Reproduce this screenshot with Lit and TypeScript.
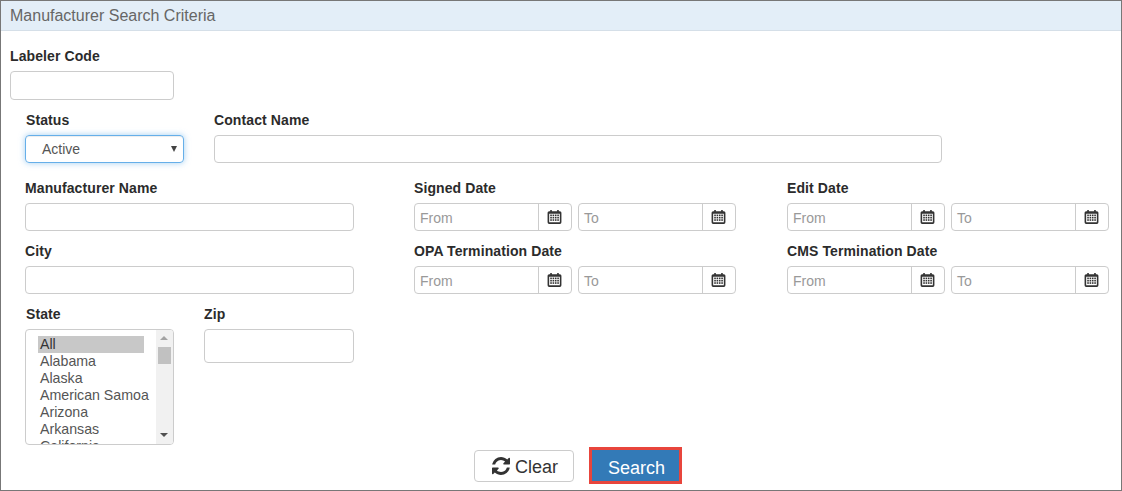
import { LitElement, html, css, svg } from "lit";
import { customElement } from "lit/decorators.js";

const cal = html`<svg class="cal" viewBox="0 0 14 15" width="15" height="16">
  <path fill="#333" fill-rule="evenodd" d="M2 2h1V1h1.5v1h5V1H11v1h1a1.5 1.5 0 0 1 1.5 1.5v9A1.5 1.5 0 0 1 12 14H2a1.5 1.5 0 0 1-1.5-1.5v-9A1.5 1.5 0 0 1 2 2zM2 4.5v8h10v-8z"/>
  ${[5.2, 7.4, 9.6].flatMap((y) => [3, 5.2, 7.4, 9.6].map((x) => svg`<rect x="${x}" y="${y}" width="1.5" height="1.5" fill="#333"/>`))}
</svg>`;

@customElement("date-range")
class DateRange extends LitElement {
  static styles = css`
    :host { display: grid; grid-template-columns: 158px 158px; column-gap: 6px; }
    .g { display: flex; height: 28px; box-sizing: border-box; border: 1px solid #ccc; border-radius: 4px; background: #fff; }
    .t { flex: 1; padding-left: 5px; font-size: 14px; line-height: 29px; color: #999; }
    .b { width: 33px; border-left: 1px solid #ccc; display: flex; align-items: center; justify-content: center; padding-right: 2px; box-sizing: border-box; }
    .cal { display: block; margin-top: -1px; }
  `;
  render() {
    return html`
      <div class="g"><div class="t">From</div><div class="b">${cal}</div></div>
      <div class="g"><div class="t">To</div><div class="b">${cal}</div></div>`;
  }
}

@customElement("app-root")
class AppRoot extends LitElement {
  static styles = css`
    :host { display: block; font-family: "Liberation Sans", Arial, sans-serif; color: #333; }
    .card { height: 491px; box-sizing: border-box; border: 1px solid #777; display: flex; flex-direction: column; }
    .head { height: 30px; box-sizing: border-box; border-bottom: 1px solid #d5dfe8; background: #e3eef8; padding-left: 9px; font-size: 16px; line-height: 29px; color: #666; }
    .body { flex: 1; padding-top: 17px; display: flex; flex-direction: column; }
    label { display: block; font-size: 14px; letter-spacing: 0.1px; font-weight: bold; line-height: 17px; color: #2b2b2b; height: 17px; margin-bottom: 6px; }
    .in { box-sizing: border-box; height: 28px; border: 1px solid #ccc; border-radius: 4px; background: #fff; }
    .r1 { padding-left: 9px; width: 164px; }
    .r1 .in { height: 29px; }
    .r2 { margin-top: 12px; padding-left: 24px; display: grid; grid-template-columns: 159px 728px; column-gap: 30px; }
    .r2 label { padding-left: 1px; }
    .r2 label.c { padding-left: 0; }
    .sel { box-sizing: border-box; height: 28px; border: 1px solid #66afe9; border-radius: 4px; box-shadow: 0 0 6px rgba(102,175,233,.6), inset 0 1px 1px rgba(0,0,0,.075); display: flex; align-items: center; padding-left: 16px; font-size: 14px; color: #555; position: relative; }
    .arr { position: absolute; right: 6px; top: 10px; width: 0; height: 0; border-left: 3px solid transparent; border-right: 3px solid transparent; border-top: 6px solid #444; }
    .r3 { margin-top: 17px; padding-left: 24px; display: grid; grid-template-columns: 329px 322px 322px; column-gap: 60px; row-gap: 12px; }
    .r3 > div:nth-child(3n) { margin-left: -9px; }
    .r5 { margin-top: 12px; padding-left: 24px; display: grid; grid-template-columns: 149px 150px; column-gap: 30px; align-items: start; }
    .r5 label { padding-left: 1px; }
    .r5 label.z { padding-left: 0; }
    .list { box-sizing: border-box; height: 116px; border: 1px solid #ccc; border-radius: 4px; overflow: hidden; display: flex; background: #fff; }
    .opts { flex: 1; padding: 6px 0 0 12px; font-size: 14.2px; line-height: 17px; color: #555; overflow: hidden; }
    .opt { padding-left: 2px; white-space: nowrap; }
    .opt.s { background: #c8c8c8; color: #333; width: 104px; }
    .sb { width: 17px; background: #f1f1f1; display: flex; flex-direction: column; align-items: center; position: relative; }
    .up, .dn { position: absolute; left: 4px; width: 0; height: 0; border-left: 4px solid transparent; border-right: 4px solid transparent; }
    .up { top: 6px; border-bottom: 4px solid #a3a3a3; }
    .dn { bottom: 7px; border-top: 4px solid #505050; }
    .th { position: absolute; left: 2px; top: 17px; width: 13px; height: 17px; background: #c1c1c1; }
    .zip { height: 34px; }
    .foot { position: absolute; left: 474px; top: 447px; display: flex; align-items: center; gap: 15px; }
    button { font-family: inherit; box-sizing: border-box; cursor: pointer; }
    .clear { width: 100px; height: 32px; border: 1px solid #ccc; border-radius: 4px; background: #fff; color: #333; font-size: 18px; display: flex; align-items: center; justify-content: center; gap: 5px; padding: 3px 0 0 2px; }
    .clear svg { margin-top: -3px; }
    .search { width: 93px; height: 37px; border: 3px solid #e8453c; background: #337ab7; color: #fff; font-size: 18px; padding: 5px 0 0 2px; }
  `;
  render() {
    const states = ["Alabama", "Alaska", "American Samoa", "Arizona", "Arkansas", "California"];
    return html`<div class="card">
      <div class="head">Manufacturer Search Criteria</div>
      <div class="body">
        <div class="r1"><label>Labeler Code</label><div class="in"></div></div>
        <div class="r2">
          <div><label>Status</label><div class="sel">Active<span class="arr"></span></div></div>
          <div><label class="c">Contact Name</label><div class="in"></div></div>
        </div>
        <div class="r3">
          <div><label>Manufacturer Name</label><div class="in"></div></div>
          <div><label>Signed Date</label><date-range></date-range></div>
          <div><label>Edit Date</label><date-range></date-range></div>
          <div><label>City</label><div class="in"></div></div>
          <div><label>OPA Termination Date</label><date-range></date-range></div>
          <div><label>CMS Termination Date</label><date-range></date-range></div>
        </div>
        <div class="r5">
          <div><label>State</label>
            <div class="list">
              <div class="opts"><div class="opt s">All</div>${states.map((s) => html`<div class="opt">${s}</div>`)}</div>
              <div class="sb"><span class="up"></span><span class="th"></span><span class="dn"></span></div>
            </div>
          </div>
          <div><label class="z">Zip</label><div class="in zip"></div></div>
        </div>
      </div>
      <div class="foot">
        <button class="clear"><svg viewBox="0 0 1536 1536" width="18" height="18"><path fill="#333" d="M1511 928q0 5-1 7-64 268-268 434.5t-478 166.5q-146 0-282.5-55t-243.5-157l-129 129q-19 19-45 19t-45-19-19-45v-448q0-26 19-45t45-19h448q26 0 45 19t19 45-19 45l-137 137q71 66 161 102t187 36q134 0 250-65t186-179q11-17 53-117 8-23 30-23h192q13 0 22.5 9.5t9.5 22.5zm25-800v448q0 26-19 45t-45 19h-448q-26 0-45-19t-19-45 19-45l138-138q-148-137-349-137-134 0-250 65t-186 179q-11 17-53 117-8 23-30 23h-199q-13 0-22.5-9.5t-9.5-22.5v-7q65-268 270-434.5t480-166.5q146 0 284 55.5t245 156.5l130-129q19-19 45-19t45 19 19 45z"/></svg>Clear</button>
        <button class="search">Search</button>
      </div>
    </div>`;
  }
}
